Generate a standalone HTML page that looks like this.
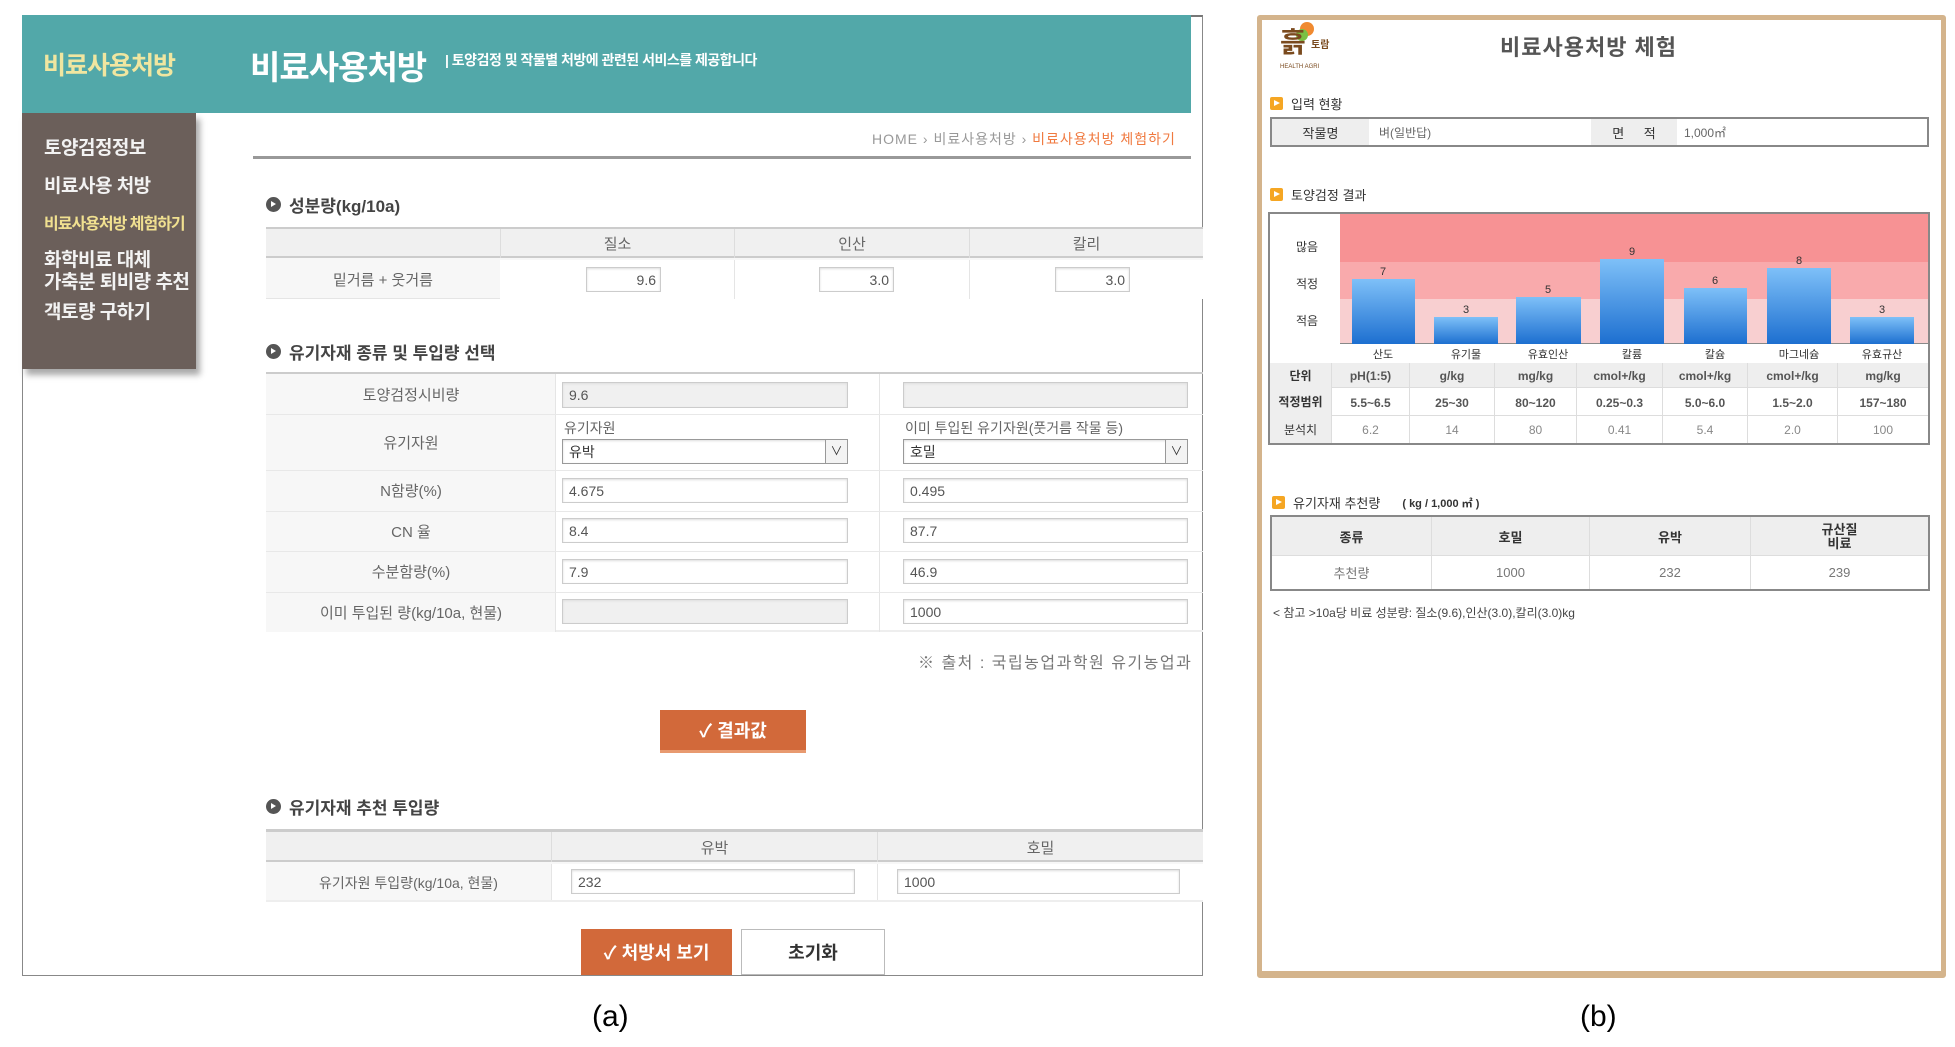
<!DOCTYPE html>
<html><head><meta charset="utf-8">
<style>
*{margin:0;padding:0;box-sizing:border-box}
body{width:1955px;height:1047px;background:#fff;position:relative;overflow:hidden;font-family:"Liberation Sans","Noto Sans CJK KR",sans-serif;color:#555}
.a{position:absolute}
.c{display:flex;align-items:center;justify-content:center}
.inp{position:absolute;background:#fff;border:1px solid #ccc;box-shadow:inset 0 1px 2px #ddd;font-size:14px;color:#555;padding-left:6px;display:flex;align-items:center}
.gr{background:#f0f0f0}
.sec{position:absolute;font-size:17px;font-weight:bold;color:#444;display:flex;align-items:center}
.sec i{display:inline-block;width:15px;height:15px;border-radius:50%;background:#555;margin-right:8px;position:relative}
.sec i:after{content:"";position:absolute;left:5px;top:4px;border-left:5px solid #fff;border-top:3.5px solid transparent;border-bottom:3.5px solid transparent}
.lab{font-size:15px;color:#666}
.bh{position:absolute;font-size:13px;color:#333;display:flex;align-items:center}
.bh i{display:inline-block;width:13px;height:13px;background:#f5a623;border-radius:2px;margin-right:8px;position:relative}
.bh i:after{content:"";position:absolute;left:4px;top:3px;border-left:6px solid #fff;border-top:3.5px solid transparent;border-bottom:3.5px solid transparent}
.t{position:absolute;font-size:12px;display:flex;align-items:center;justify-content:center;border-right:1px solid #ddd}
</style></head><body>

<!-- Panel a -->
<div class="a" style="left:22px;top:15px;width:1181px;height:961px;border:1px solid #888;border-top:2px solid #777"></div>
<div class="a c" style="left:22px;top:15px;width:174px;height:98px;background:#52a8a9;color:#f0e6a0;font-size:25px;font-weight:bold;letter-spacing:-1px">비료사용처방</div>
<div class="a" style="left:22px;top:113px;width:174px;height:256px;background:#6b5f5a;box-shadow:4px 6px 6px #aaa"></div>
<div class="a" style="left:44px;top:130px;font-size:19px;color:#f2f2f2;line-height:38px;font-weight:bold;letter-spacing:-0.5px">
<div>토양검정정보</div><div>비료사용 처방</div><div style="color:#f0e090;font-size:16px;letter-spacing:-1px">비료사용처방 체험하기</div><div style="line-height:22px;margin-top:6px">화학비료 대체<br>가축분 퇴비량 추천</div><div>객토량 구하기</div></div>
<div class="a" style="left:196px;top:15px;width:995px;height:98px;background:#52a8a9"></div>
<div class="a" style="left:250px;top:41px;font-size:33px;color:#fff;font-weight:bold;letter-spacing:-1px">비료사용처방</div>
<div class="a" style="left:445px;top:50px;font-size:14px;color:#fff;font-weight:bold;letter-spacing:-0.5px">| 토양검정 및 작물별 처방에 관련된 서비스를 제공합니다</div>
<div class="a" style="left:872px;top:129px;font-size:14px;color:#999;letter-spacing:1px">HOME › 비료사용처방 › <span style="color:#f07a40">비료사용처방 체험하기</span></div>
<div class="a" style="left:253px;top:156px;width:938px;height:3px;background:#999"></div>

<div class="sec" style="left:266px;top:192px"><i></i>성분량(kg/10a)</div>
<div class="a" style="left:266px;top:227px;width:937px;height:72px;background:#f7f7f7;border-top:2px solid #ccc;border-bottom:1px solid #e5e5e5"></div>
<div class="a" style="left:266px;top:229px;width:937px;height:29px;background:#f0f0f0;border-bottom:2px solid #ccc"></div>
<div class="a c lab" style="left:500px;top:229px;width:234px;height:29px;border-left:1px solid #ddd">질소</div>
<div class="a c lab" style="left:734px;top:229px;width:235px;height:29px;border-left:1px solid #ddd">인산</div>
<div class="a c lab" style="left:969px;top:229px;width:234px;height:29px;border-left:1px solid #ddd">칼리</div>
<div class="a c lab" style="left:266px;top:260px;width:234px;height:39px">밑거름 + 웃거름</div>
<div class="a" style="left:500px;top:260px;width:703px;height:39px;background:#fff"></div>
<div class="a" style="left:734px;top:260px;width:1px;height:39px;background:#e5e5e5"></div>
<div class="a" style="left:969px;top:260px;width:1px;height:39px;background:#e5e5e5"></div>
<div class="inp" style="left:586px;top:267px;width:75px;height:25px;justify-content:flex-end;padding-right:4px">9.6</div>
<div class="inp" style="left:819px;top:267px;width:75px;height:25px;justify-content:flex-end;padding-right:4px">3.0</div>
<div class="inp" style="left:1055px;top:267px;width:75px;height:25px;justify-content:flex-end;padding-right:4px">3.0</div>

<div class="sec" style="left:266px;top:339px"><i></i>유기자재 종류 및 투입량 선택</div>
<div class="a" style="left:266px;top:372px;width:937px;height:260px;border-top:2px solid #ccc;border-bottom:2px solid #eee"></div>
<div class="a" style="left:266px;top:374px;width:290px;height:258px;background:#f7f7f7;border-right:1px solid #e5e5e5"></div>
<div class="a" style="left:879px;top:374px;width:1px;height:258px;background:#e5e5e5"></div>
<div class="a" style="left:266px;top:414px;width:937px;height:1px;background:#e8e8e8"></div>
<div class="a" style="left:266px;top:470px;width:937px;height:1px;background:#e8e8e8"></div>
<div class="a" style="left:266px;top:511px;width:937px;height:1px;background:#e8e8e8"></div>
<div class="a" style="left:266px;top:551px;width:937px;height:1px;background:#e8e8e8"></div>
<div class="a" style="left:266px;top:592px;width:937px;height:1px;background:#e8e8e8"></div>
<div class="a c lab" style="left:266px;top:374px;width:290px;height:40px">토양검정시비량</div>
<div class="a c lab" style="left:266px;top:414px;width:290px;height:56px">유기자원</div>
<div class="a c lab" style="left:266px;top:470px;width:290px;height:41px">N함량(%)</div>
<div class="a c lab" style="left:266px;top:511px;width:290px;height:40px">CN 율</div>
<div class="a c lab" style="left:266px;top:551px;width:290px;height:41px">수분함량(%)</div>
<div class="a c lab" style="left:266px;top:592px;width:290px;height:40px">이미 투입된 량(kg/10a, 현물)</div>
<div class="inp gr" style="left:562px;top:382px;width:286px;height:26px">9.6</div>
<div class="inp gr" style="left:903px;top:382px;width:285px;height:26px"></div>
<div class="a lab" style="left:564px;top:418px;font-size:14px">유기자원</div>
<div class="a lab" style="left:905px;top:418px;font-size:14px">이미 투입된 유기자원(풋거름 작물 등)</div>
<div class="inp" style="left:562px;top:439px;width:286px;height:25px;color:#333;border-color:#999">유박<span style="position:absolute;right:0;top:0;width:22px;height:23px;border-left:1px solid #999;background:#f3f3f3;font-size:12px;text-align:center;line-height:23px">∨</span></div>
<div class="inp" style="left:903px;top:439px;width:285px;height:25px;color:#333;border-color:#999">호밀<span style="position:absolute;right:0;top:0;width:22px;height:23px;border-left:1px solid #999;background:#f3f3f3;font-size:12px;text-align:center;line-height:23px">∨</span></div>
<div class="inp" style="left:562px;top:478px;width:286px;height:25px">4.675</div>
<div class="inp" style="left:903px;top:478px;width:285px;height:25px">0.495</div>
<div class="inp" style="left:562px;top:518px;width:286px;height:25px">8.4</div>
<div class="inp" style="left:903px;top:518px;width:285px;height:25px">87.7</div>
<div class="inp" style="left:562px;top:559px;width:286px;height:25px">7.9</div>
<div class="inp" style="left:903px;top:559px;width:285px;height:25px">46.9</div>
<div class="inp gr" style="left:562px;top:599px;width:286px;height:25px"></div>
<div class="inp" style="left:903px;top:599px;width:285px;height:25px">1000</div>
<div class="a" style="left:918px;top:649px;font-size:16px;color:#777;white-space:nowrap;width:285px;overflow:hidden;letter-spacing:1.5px">※ 출처 : 국립농업과학원 유기농업과</div>

<div class="a c" style="left:660px;top:710px;width:146px;height:43px;background:#d2693a;color:#fff;font-size:18px;font-weight:bold;border-bottom:3px solid #e89a70">✓ 결과값</div>

<div class="sec" style="left:266px;top:794px"><i></i>유기자재 추천 투입량</div>
<div class="a" style="left:266px;top:829px;width:937px;height:73px;border-top:3px solid #ccc;border-bottom:2px solid #eee;background:#f7f7f7"></div>
<div class="a" style="left:266px;top:832px;width:937px;height:30px;background:#f0f0f0;border-bottom:2px solid #ccc"></div>
<div class="a c lab" style="left:551px;top:832px;width:326px;height:30px;border-left:1px solid #ddd">유박</div>
<div class="a c lab" style="left:877px;top:832px;width:326px;height:30px;border-left:1px solid #ddd">호밀</div>
<div class="a c lab" style="left:266px;top:864px;width:285px;height:38px;font-size:14px">유기자원 투입량(kg/10a, 현물)</div>
<div class="a" style="left:551px;top:864px;width:652px;height:36px;background:#fff;border-left:1px solid #e5e5e5"></div>
<div class="a" style="left:877px;top:864px;width:1px;height:36px;background:#e5e5e5"></div>
<div class="inp" style="left:571px;top:869px;width:284px;height:25px">232</div>
<div class="inp" style="left:897px;top:869px;width:283px;height:25px">1000</div>

<div class="a c" style="left:581px;top:929px;width:151px;height:46px;background:#d2693a;color:#fff;font-size:18px;font-weight:bold">✓ 처방서 보기</div>
<div class="a c" style="left:741px;top:929px;width:144px;height:46px;background:#fff;border:1px solid #bbb;color:#333;font-size:18px;font-weight:bold">초기화</div>

<div class="a" style="left:592px;top:1000px;font-size:30px;color:#000">(a)</div>
<div class="a" style="left:1580px;top:1000px;font-size:30px;color:#000">(b)</div>

<!-- Panel b -->
<div class="a" style="left:1257px;top:15px;width:689px;height:963px;border:5px solid #d4b48c;border-bottom-width:7px;border-radius:3px"></div>
<div class="a" style="left:1278px;top:22px;width:62px;height:55px">
<div class="a" style="left:22px;top:0;width:14px;height:14px;border-radius:50%;background:#f08a30"></div>
<div class="a" style="left:18px;top:7px;width:12px;height:12px;border-radius:50%;background:#7bc043"></div>
<div class="a" style="left:2px;top:6px;font-size:28px;font-weight:bold;color:#7a4a1e;line-height:30px">흙</div>
<div class="a" style="left:33px;top:14px;font-size:10px;font-weight:bold;color:#7a4a1e">토람</div>
<div class="a" style="left:2px;top:42px;font-size:6px;color:#7a4a1e">HEALTH AGRI</div>
</div>
<div class="a" style="left:1500px;top:30px;font-size:22px;font-weight:bold;color:#555;letter-spacing:1px">비료사용처방 체험</div>

<div class="bh" style="left:1270px;top:94px"><i></i>입력 현황</div>
<div class="a" style="left:1270px;top:117px;width:659px;height:30px;border:2px solid #888;background:#fff"></div>
<div class="a c" style="left:1272px;top:119px;width:97px;height:26px;background:#eee;font-size:13px;color:#333">작물명</div>
<div class="a" style="left:1379px;top:124px;font-size:12px;color:#666">벼(일반답)</div>
<div class="a c" style="left:1591px;top:119px;width:86px;height:26px;background:#eee;font-size:13px;color:#333;word-spacing:16px">면 적</div>
<div class="a" style="left:1684px;top:124px;font-size:12px;color:#666">1,000㎡</div>

<div class="bh" style="left:1270px;top:185px"><i></i>토양검정 결과</div>
<div class="a" style="left:1268px;top:212px;width:662px;height:233px;border:2px solid #888;background:#fff"></div>
<div class="a" style="left:1340px;top:214px;width:588px;height:48px;background:#f79294"></div>
<div class="a" style="left:1340px;top:262px;width:588px;height:37px;background:#f9aaac"></div>
<div class="a" style="left:1340px;top:299px;width:588px;height:45px;background:#f8cfd0"></div>
<div class="a" style="left:1340px;top:343px;width:588px;height:1px;background:#888"></div>
<div class="a" style="left:1296px;top:238px;font-size:12px;color:#333">많음</div>
<div class="a" style="left:1296px;top:275px;font-size:12px;color:#333">적정</div>
<div class="a" style="left:1296px;top:312px;font-size:12px;color:#333">적음</div>
<svg class="a" style="left:0;top:0" width="1955" height="400">
<defs><linearGradient id="g" x1="0" y1="0" x2="0" y2="1"><stop offset="0" stop-color="#7ec0f8"/><stop offset="1" stop-color="#1d6fd0"/></linearGradient></defs>
<g fill="url(#g)">
<rect x="1352" y="279" width="63" height="65"/><rect x="1434" y="317" width="64" height="27"/><rect x="1516" y="297" width="65" height="47"/><rect x="1600" y="259" width="64" height="85"/><rect x="1684" y="288" width="63" height="56"/><rect x="1767" y="268" width="64" height="76"/><rect x="1850" y="317" width="64" height="27"/>
</g>
<g font-size="11" fill="#333" text-anchor="middle" font-family="Liberation Sans">
<text x="1383" y="275">7</text><text x="1466" y="313">3</text><text x="1548" y="293">5</text><text x="1632" y="255">9</text><text x="1715" y="284">6</text><text x="1799" y="264">8</text><text x="1882" y="313">3</text>
</g>
<g font-size="11" fill="#333" text-anchor="middle" font-family="Liberation Sans,Noto Sans CJK KR">
<text x="1383" y="358">산도</text><text x="1466" y="358">유기물</text><text x="1548" y="358">유효인산</text><text x="1632" y="358">칼륨</text><text x="1715" y="358">칼슘</text><text x="1799" y="358">마그네슘</text><text x="1882" y="358">유효규산</text>
</g>
</svg>
<div class="a" style="left:1270px;top:363px;width:658px;height:24px;background:#eee"></div>
<div class="a" style="left:1270px;top:387px;width:658px;height:1px;background:#ddd"></div>
<div class="a" style="left:1270px;top:415px;width:658px;height:1px;background:#ddd"></div>
<div class="a" style="left:1270px;top:387px;width:62px;height:56px;background:#eee"></div>
<div class="t" style="left:1270px;top:363px;width:62px;height:24px;font-weight:bold;color:#333">단위</div>
<div class="t" style="left:1270px;top:387px;width:62px;height:28px;font-weight:bold;color:#333">적정범위</div>
<div class="t" style="left:1270px;top:415px;width:62px;height:28px;color:#333">분석치</div>
<div class="t" style="left:1332px;top:363px;width:78px;height:80px;flex-direction:column;justify-content:space-around;font-weight:bold"><span>pH(1:5)</span><span>5.5~6.5</span><span style="font-weight:normal;color:#888">6.2</span></div>
<div class="t" style="left:1410px;top:363px;width:85px;height:80px;flex-direction:column;justify-content:space-around;font-weight:bold"><span>g/kg</span><span>25~30</span><span style="font-weight:normal;color:#888">14</span></div>
<div class="t" style="left:1495px;top:363px;width:82px;height:80px;flex-direction:column;justify-content:space-around;font-weight:bold"><span>mg/kg</span><span>80~120</span><span style="font-weight:normal;color:#888">80</span></div>
<div class="t" style="left:1577px;top:363px;width:86px;height:80px;flex-direction:column;justify-content:space-around;font-weight:bold"><span>cmol+/kg</span><span>0.25~0.3</span><span style="font-weight:normal;color:#888">0.41</span></div>
<div class="t" style="left:1663px;top:363px;width:85px;height:80px;flex-direction:column;justify-content:space-around;font-weight:bold"><span>cmol+/kg</span><span>5.0~6.0</span><span style="font-weight:normal;color:#888">5.4</span></div>
<div class="t" style="left:1748px;top:363px;width:90px;height:80px;flex-direction:column;justify-content:space-around;font-weight:bold"><span>cmol+/kg</span><span>1.5~2.0</span><span style="font-weight:normal;color:#888">2.0</span></div>
<div class="t" style="left:1838px;top:363px;width:90px;height:80px;flex-direction:column;justify-content:space-around;font-weight:bold;border-right:none"><span>mg/kg</span><span>157~180</span><span style="font-weight:normal;color:#888">100</span></div>

<div class="bh" style="left:1272px;top:493px"><i></i>유기자재 추천량 <span style="font-size:11px;font-weight:bold;margin-left:22px">( kg / 1,000 ㎡ )</span></div>
<div class="a" style="left:1270px;top:515px;width:660px;height:76px;border:2px solid #888;background:#fff"></div>
<div class="a" style="left:1272px;top:517px;width:656px;height:39px;background:#eee;border-bottom:1px solid #ddd"></div>
<div class="t" style="left:1272px;top:517px;width:160px;height:39px;font-weight:bold;color:#333;font-size:13px">종류</div>
<div class="t" style="left:1432px;top:517px;width:158px;height:39px;font-weight:bold;color:#333;font-size:13px">호밀</div>
<div class="t" style="left:1590px;top:517px;width:161px;height:39px;font-weight:bold;color:#333;font-size:13px">유박</div>
<div class="t" style="left:1751px;top:517px;width:177px;height:39px;font-weight:bold;color:#333;font-size:13px;line-height:14px;text-align:center;border-right:none">규산질<br>비료</div>
<div class="t" style="left:1272px;top:556px;width:160px;height:33px;color:#777;font-size:13px">추천량</div>
<div class="t" style="left:1432px;top:556px;width:158px;height:33px;color:#777;font-size:13px">1000</div>
<div class="t" style="left:1590px;top:556px;width:161px;height:33px;color:#777;font-size:13px">232</div>
<div class="t" style="left:1751px;top:556px;width:177px;height:33px;color:#777;font-size:13px;border-right:none">239</div>
<div class="a" style="left:1273px;top:604px;font-size:12px;color:#444">&lt; 참고 &gt;10a당 비료 성분량: 질소(9.6),인산(3.0),칼리(3.0)kg</div>
</body></html>
